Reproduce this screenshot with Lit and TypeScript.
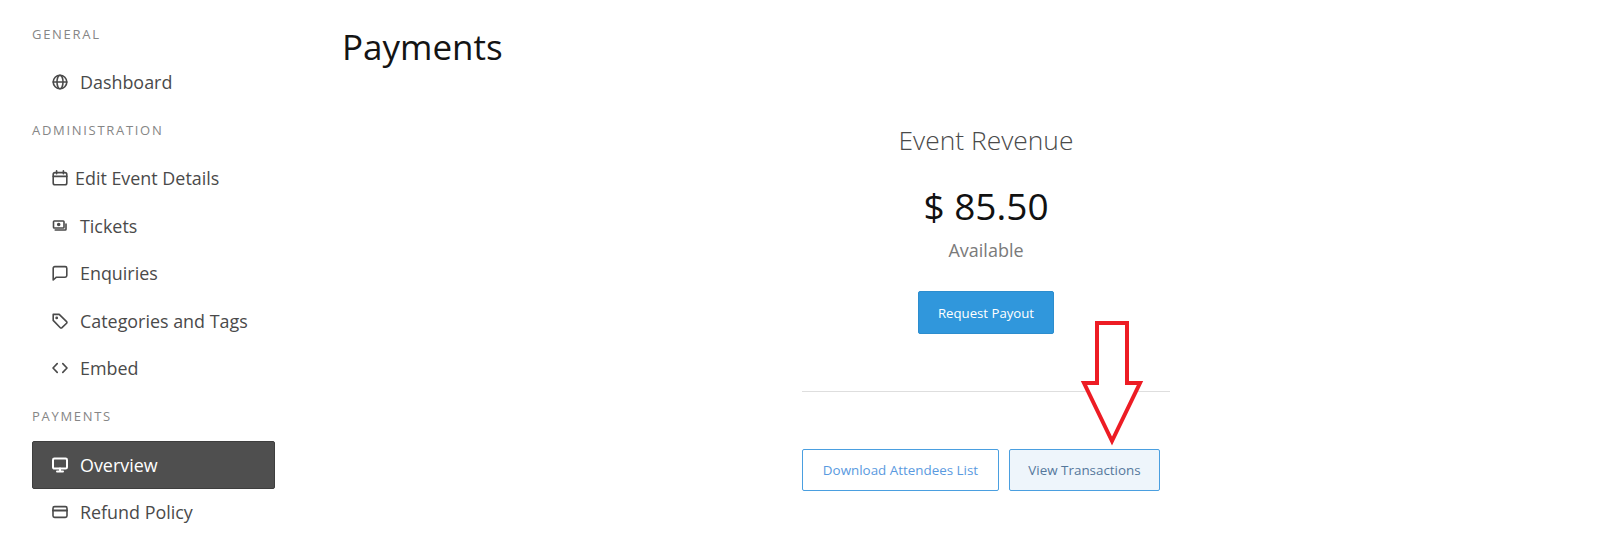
import { LitElement, css, html, svg } from 'lit';
import { customElement } from 'lit/decorators.js';

interface NavItem {
  label: string;
  icon: unknown;
  active?: boolean;
  tight?: boolean;
}

const icons = {
  globe: svg`<circle cx="8" cy="8" r="6.8"/><ellipse cx="8" cy="8" rx="3" ry="6.8"/><path d="M1.2 8h13.6"/>`,
  calendar: svg`<rect x="1.2" y="2.6" width="13.6" height="12.2" rx="1.8"/><path d="M1.2 6.4h13.6M4.6 .8v3M11.4 .8v3"/>`,
  tickets: svg`<rect x="1.5" y="3" width="10.5" height="7" rx=".8"/><circle cx="6.7" cy="6.5" r="1" fill="currentColor"/><path d="M14 6v5.2a.8.8 0 0 1-.8.8H3.2"/>`,
  chat: svg`<path d="M2.8 1.6h10.4a1.6 1.6 0 0 1 1.6 1.6v7.4a1.6 1.6 0 0 1-1.6 1.6H4.4L1.2 15V3.2a1.6 1.6 0 0 1 1.6-1.6z"/>`,
  tag: svg`<path d="M1.2 1.4h6l7.4 7.2a1.2 1.2 0 0 1 0 1.7l-4.6 4.4a1.2 1.2 0 0 1-1.7 0L1.2 7.4z"/><circle cx="4.7" cy="4.9" r=".6" fill="currentColor"/>`,
  code: svg`<path d="M5.2 3.6 1 8l4.2 4.4M10.8 3.6 15 8l-4.2 4.4"/>`,
  monitor: svg`<rect x="1" y="1.6" width="14" height="10" rx="1.4"/><path d="M5 14.4h6M8 11.6v2.8"/>`,
  card: svg`<rect x="1" y="2.6" width="14" height="10.8" rx="1.6"/><path d="M1 6.6h14" stroke-width="2"/>`,
};

const sections: { title: string; items: NavItem[] }[] = [
  { title: 'GENERAL', items: [{ label: 'Dashboard', icon: icons.globe }] },
  {
    title: 'ADMINISTRATION',
    items: [
      { label: 'Edit Event Details', icon: icons.calendar, tight: true },
      { label: 'Tickets', icon: icons.tickets },
      { label: 'Enquiries', icon: icons.chat },
      { label: 'Categories and Tags', icon: icons.tag },
      { label: 'Embed', icon: icons.code },
    ],
  },
  {
    title: 'PAYMENTS',
    items: [
      { label: 'Overview', icon: icons.monitor, active: true },
      { label: 'Refund Policy', icon: icons.card },
    ],
  },
];

@customElement('app-root')
export class AppRoot extends LitElement {
  static styles = css`
    :host {
      display: block;
      position: relative;
      height: 533px;
      overflow: hidden;
      background: #fff;
      font-family: 'Open Sans', 'Noto Sans', sans-serif;
      color: #4a4a4a;
    }
    .page {
      display: flex;
      align-items: flex-start;
    }
    .sidebar {
      width: 243px;
      margin-left: 32px;
      padding-top: 24px;
      flex: none;
    }
    .heading {
      height: 20px;
      line-height: 20px;
      font-size: 13px;
      letter-spacing: 1.7px;
      color: #868686;
      margin-bottom: 15px;
    }
    .section:first-child .heading {
      margin-bottom: 14px;
    }
    .section + .section {
      margin-top: 14px;
    }
    .item {
      display: flex;
      align-items: center;
      height: 47.5px;
      padding-left: 20px;
      font-size: 17.9px;
      color: #4a4a4a;
      box-sizing: border-box;
    }
    .item svg {
      width: 16px;
      height: 16px;
      flex: none;
      margin-right: 12px;
      fill: none;
      stroke: currentColor;
      stroke-width: 1.6;
      stroke-linecap: round;
      stroke-linejoin: round;
    }
    .item.tight svg {
      margin-right: 7px;
    }
    .item.active {
      background: #4f4f4f;
      color: #fff;
      border-radius: 2px;
      border: 1px solid #3e3e3e;
      padding-left: 19px;
    }
    .item.active svg {
      stroke-width: 2;
    }
    .main {
      flex: 1;
      padding-left: 67px;
    }
    h1 {
      margin: 22px 0 0;
      font-size: 35px;
      line-height: 50px;
      font-weight: 400;
      color: #141414;
    }
    .panel {
      width: 368px;
      margin: 52px 0 0 460px;
      display: flex;
      flex-direction: column;
      align-items: center;
    }
    h2 {
      margin: 0;
      font-size: 26.4px;
      line-height: 32px;
      font-weight: 300;
      color: #4a4a4a;
    }
    .amount {
      margin-top: 29px;
      font-size: 37px;
      line-height: 42px;
      font-weight: 500;
      color: #111;
    }
    .note {
      margin-top: 12px;
      font-size: 18px;
      line-height: 22px;
      color: #7a7a7a;
    }
    button {
      font-family: inherit;
      font-size: 13.2px;
      border-radius: 2px;
      box-sizing: border-box;
      background: #fff;
      padding: 0;
    }
    .payout {
      width: 136px;
      height: 43px;
      margin-top: 30px;
      background: #3097dc;
      border: 1px solid #2c8dce;
      color: #fff;
    }
    .panel hr {
      align-self: stretch;
      margin: 57px 0 0;
      border: none;
      border-top: 1px solid #dedede;
    }
    .actions {
      align-self: stretch;
      display: flex;
      gap: 10px;
      margin-top: 57px;
    }
    .actions button {
      height: 42px;
      border: 1px solid #4a9fe0;
      color: #5a9ae0;
      font-size: 13.4px;
    }
    .download {
      width: 197px;
    }
    .view {
      width: 151px;
    }
    .actions .view {
      background: #eef5fb;
      color: #55789c;
    }
    .arrow {
      position: absolute;
      left: 1078px;
      top: 318px;
      width: 70px;
      height: 132px;
      fill: #fff;
      stroke: #ed1c24;
      stroke-width: 4;
      stroke-linejoin: miter;
    }
  `;

  render() {
    return html`
      <div class="page">
        <nav class="sidebar">
          ${sections.map(
            (s) => html`
              <div class="section">
                <div class="heading">${s.title}</div>
                ${s.items.map(
                  (i) => html`
                    <div class="item ${i.active ? 'active' : ''} ${i.tight ? 'tight' : ''}">
                      <svg viewBox="0 0 16 16">${i.icon}</svg>${i.label}
                    </div>
                  `,
                )}
              </div>
            `,
          )}
        </nav>
        <main class="main">
          <h1>Payments</h1>
          <section class="panel">
            <h2>Event Revenue</h2>
            <div class="amount">$ 85.50</div>
            <div class="note">Available</div>
            <button class="payout">Request Payout</button>
            <hr />
            <div class="actions">
              <button class="download">Download Attendees List</button>
              <button class="view">View Transactions</button>
            </div>
          </section>
        </main>
      </div>
      <svg class="arrow" viewBox="0 0 70 132">
        <path d="M19 5h30v60h13L34 123 6 65h13z" />
      </svg>
    `;
  }
}
